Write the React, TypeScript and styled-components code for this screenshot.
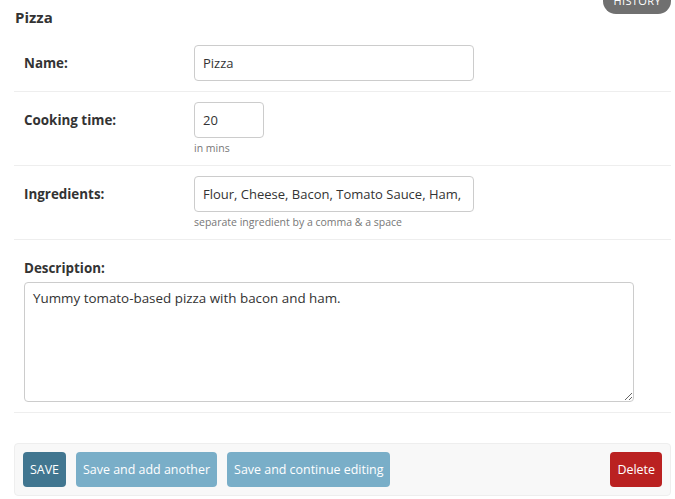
import React from "react";
import styled, { createGlobalStyle } from "styled-components";

const Global = createGlobalStyle`
  html, body { margin: 0; padding: 0; background: #fff; }
  body { font-family: "Segoe UI", "Open Sans", "Noto Sans", sans-serif; color: #333; }
  * { box-sizing: border-box; }
`;

const Page = styled.div`
  width: 675px;
  padding: 0 4px 0 14px;
  overflow: hidden;
`;

const Header = styled.div`
  display: flex;
  justify-content: space-between;
  align-items: flex-start;
  height: 35px;
`;

const Title = styled.h2`
  margin: 0;
  padding: 7px 0 0 1px;
  font-size: 15px;
  line-height: 20px;
  font-weight: 700;
  color: #333;
`;

const HistoryLink = styled.a`
  display: block;
  margin-top: -12px;
  height: 26px;
  padding: 0 10px;
  border-radius: 15px;
  background: #707070;
  color: #fff;
  font-size: 11px;
  line-height: 26px;
  letter-spacing: 0.4px;
  text-transform: uppercase;
  text-decoration: none;
`;

const Fieldset = styled.fieldset`
  margin: 0;
  padding: 0;
  border: none;
`;

const Row = styled.div<{ $stacked?: boolean }>`
  display: flex;
  flex-direction: ${(p) => (p.$stacked ? "column" : "row")};
  align-items: flex-start;
  padding: 10px;
  border-bottom: 1px solid #eee;
`;

const Label = styled.label<{ $stacked?: boolean }>`
  flex: none;
  width: ${(p) => (p.$stacked ? "auto" : "170px")};
  padding-top: 8px;
  padding-bottom: ${(p) => (p.$stacked ? "4px" : "0")};
  font-size: 13.4px;
  line-height: 20px;
  font-weight: 700;
  color: #333;
`;

const Field = styled.div`
  display: flex;
  flex-direction: column;
`;

const TextInput = styled.input<{ $w: number }>`
  width: ${(p) => p.$w}px;
  height: 36px;
  padding: 0 8px;
  border: 1px solid #ccc;
  border-radius: 4px;
  font-family: inherit;
  font-size: 13px;
  color: #333;
  background: #fff;
  outline: none;
`;

const Help = styled.div`
  margin-top: 3px;
  font-size: 10.5px;
  line-height: 14px;
  color: #777;
`;

const TextArea = styled.textarea`
  width: 610px;
  height: 120px;
  padding: 5px 8px;
  border: 1px solid #ccc;
  border-radius: 4px;
  font-family: inherit;
  font-size: 13.4px;
  line-height: 20px;
  color: #333;
  resize: both;
  outline: none;
`;

const SubmitRow = styled.div`
  display: flex;
  align-items: center;
  gap: 10px;
  margin-top: 30px;
  height: 53px;
  padding: 0 8px;
  background: #f8f8f8;
  border: 1px solid #eee;
  border-radius: 4px;
`;

const Button = styled.button<{ $variant: "default" | "secondary" | "danger" }>`
  height: 35px;
  padding: 0 7px;
  border: none;
  border-radius: 4px;
  font-family: inherit;
  font-size: 12.45px;
  color: #fff;
  cursor: pointer;
  background: ${(p) =>
    p.$variant === "default" ? "#417690" : p.$variant === "danger" ? "#ba2121" : "#79aec8"};
  margin-left: ${(p) => (p.$variant === "danger" ? "auto" : "0")};
`;

export default function App() {
  return (
    <Page>
      <Global />
      <Header>
        <Title>Pizza</Title>
        <HistoryLink href="#">History</HistoryLink>
      </Header>
      <Fieldset>
        <Row>
          <Label>Name:</Label>
          <TextInput $w={280} defaultValue="Pizza" />
        </Row>
        <Row>
          <Label>Cooking time:</Label>
          <Field>
            <TextInput $w={70} defaultValue="20" />
            <Help>in mins</Help>
          </Field>
        </Row>
        <Row>
          <Label>Ingredients:</Label>
          <Field>
            <TextInput $w={280} defaultValue="Flour, Cheese, Bacon, Tomato Sauce, Ham, Pineapple" />
            <Help>separate ingredient by a comma &amp; a space</Help>
          </Field>
        </Row>
        <Row $stacked>
          <Label $stacked>Description:</Label>
          <TextArea defaultValue="Yummy tomato-based pizza with bacon and ham." />
        </Row>
      </Fieldset>
      <SubmitRow>
        <Button $variant="default">SAVE</Button>
        <Button $variant="secondary">Save and add another</Button>
        <Button $variant="secondary">Save and continue editing</Button>
        <Button $variant="danger">Delete</Button>
      </SubmitRow>
    </Page>
  );
}
